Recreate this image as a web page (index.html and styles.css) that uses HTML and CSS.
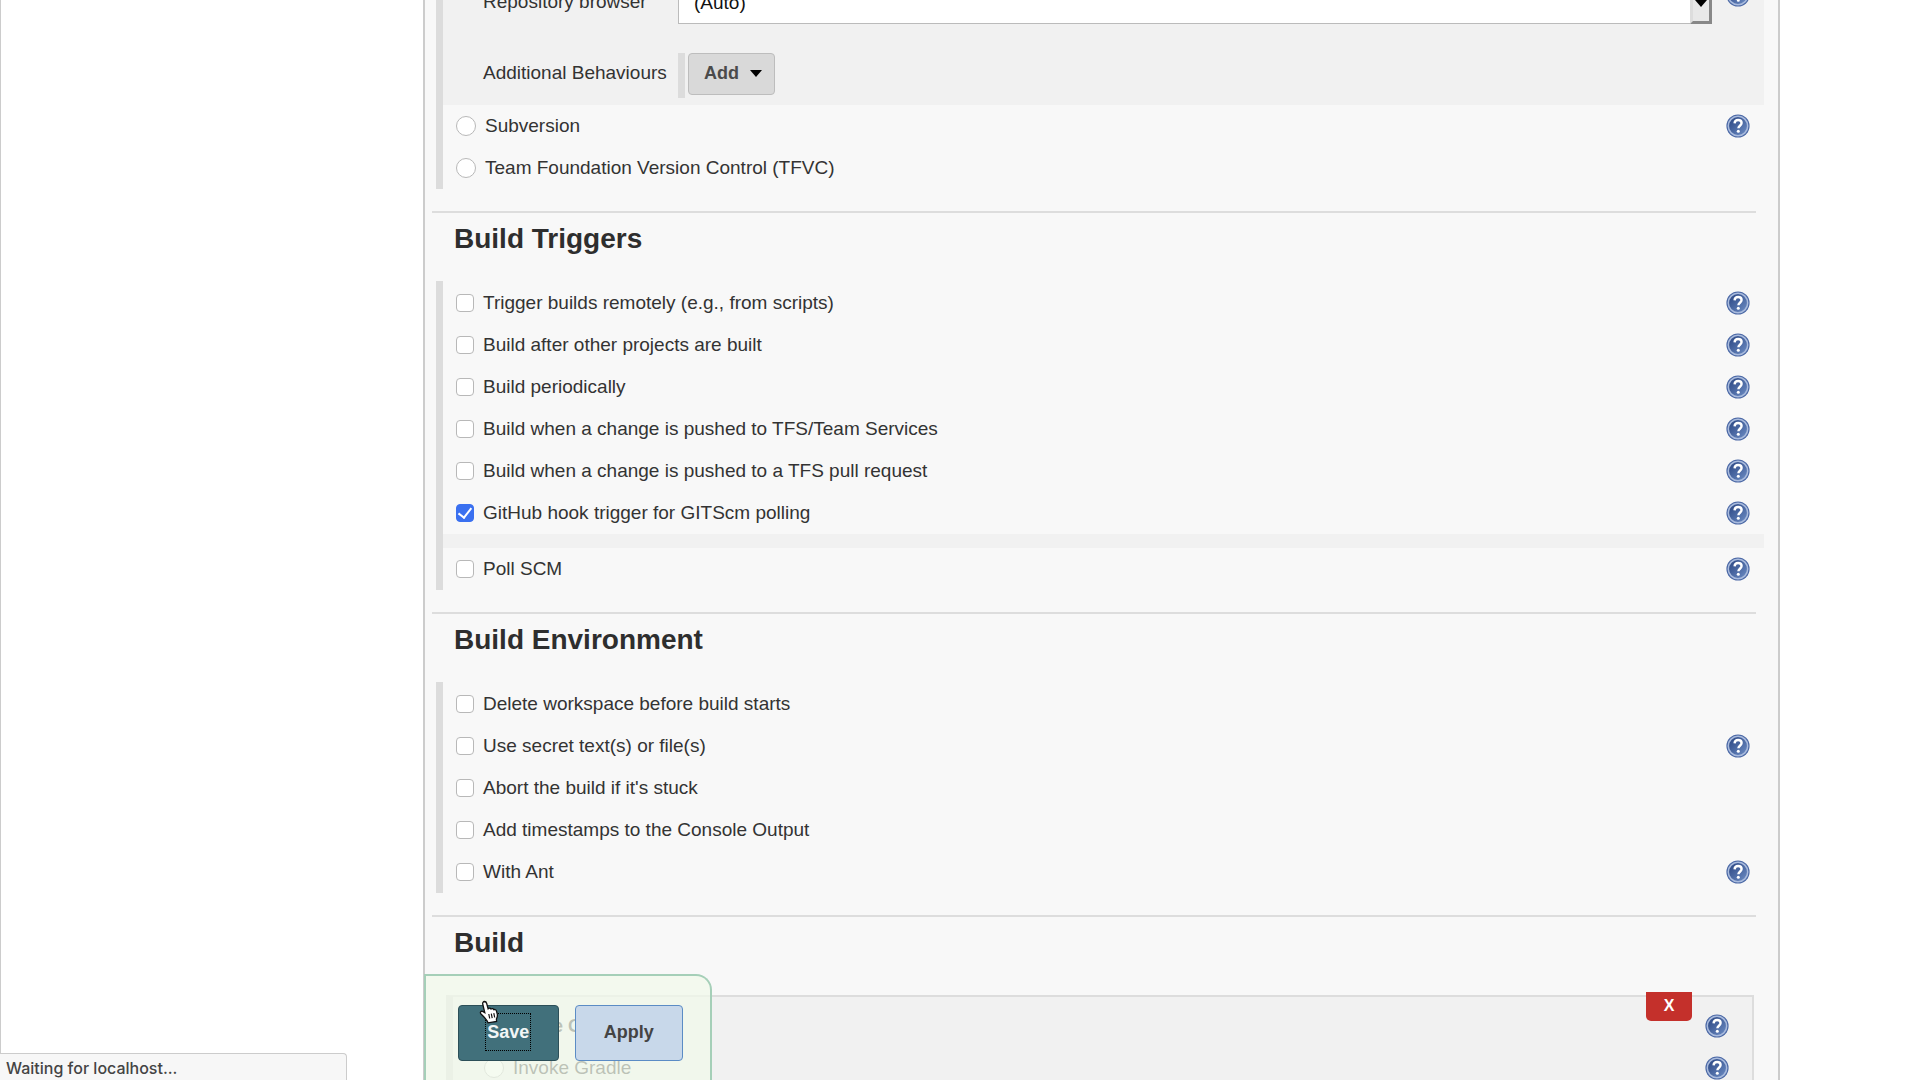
FILE: index.html
```
<!DOCTYPE html>
<html lang="en">
<head>
<meta charset="utf-8">
<title>Job configuration</title>
<link rel="stylesheet" href="styles.css">
</head>
<body>
<svg class="defs" aria-hidden="true">
  <defs>
    <linearGradient id="ball" x1="0" y1="0" x2="1" y2="1"><stop offset="0" stop-color="#27427f"/><stop offset="1" stop-color="#6f8fc6"/></linearGradient>
    <symbol id="help" viewBox="0 0 24 24">
      <circle cx="12" cy="12" r="11.6" fill="#4c69a6"/>
      <circle cx="12" cy="12" r="9.7" fill="url(#ball)" stroke="#a9bbdd" stroke-width="1.5"/>
      <path d="M8.6 9.4C8.7 7 10.2 6 12.1 6c2 0 3.5 1.100 3.500 3 0 2.600-3.200 2.800-3.200 5.200" fill="none" stroke="#fff" stroke-width="2.400"/>
      <circle cx="12.300" cy="17.300" r="1.500" fill="#fff"/>
    </symbol>
  </defs>
</svg>
<main class="panel">
  <form class="config">
    <section class="section">
      <div class="group">
        <div class="nested">
          <div class="field">
            <label class="field-name" for="browser">Repository browser</label>
            <div class="select-wrap">
              <select id="browser" class="select"><option>(Auto)</option></select>
              <span class="select-arrow"></span>
            </div>
            <a class="help" href="#" aria-label="Help"><svg><use href="#help"/></svg></a>
          </div>
          <div class="field">
            <span class="field-name">Additional Behaviours</span>
            <div class="repeat"><button type="button" class="add">Add<span class="caret"></span></button></div>
          </div>
        </div>
        <div class="row"><label class="option"><input type="radio" name="scm">Subversion</label><a class="help" href="#" aria-label="Help"><svg><use href="#help"/></svg></a></div>
        <div class="row"><label class="option"><input type="radio" name="scm">Team Foundation Version Control (TFVC)</label></div>
      </div>
    </section>
    <section class="section">
      <h2 class="title">Build Triggers</h2>
      <div class="group">
        <div class="row"><label class="option"><input type="checkbox">Trigger builds remotely (e.g., from scripts)</label><a class="help" href="#" aria-label="Help"><svg><use href="#help"/></svg></a></div>
        <div class="row"><label class="option"><input type="checkbox">Build after other projects are built</label><a class="help" href="#" aria-label="Help"><svg><use href="#help"/></svg></a></div>
        <div class="row"><label class="option"><input type="checkbox">Build periodically</label><a class="help" href="#" aria-label="Help"><svg><use href="#help"/></svg></a></div>
        <div class="row"><label class="option"><input type="checkbox">Build when a change is pushed to TFS/Team Services</label><a class="help" href="#" aria-label="Help"><svg><use href="#help"/></svg></a></div>
        <div class="row"><label class="option"><input type="checkbox">Build when a change is pushed to a TFS pull request</label><a class="help" href="#" aria-label="Help"><svg><use href="#help"/></svg></a></div>
        <div class="row"><label class="option"><input type="checkbox" checked>GitHub hook trigger for GITScm polling</label><a class="help" href="#" aria-label="Help"><svg><use href="#help"/></svg></a></div>
        <div class="nested strip"></div>
        <div class="row"><label class="option"><input type="checkbox">Poll SCM</label><a class="help" href="#" aria-label="Help"><svg><use href="#help"/></svg></a></div>
      </div>
    </section>
    <section class="section">
      <h2 class="title">Build Environment</h2>
      <div class="group">
        <div class="row"><label class="option"><input type="checkbox">Delete workspace before build starts</label></div>
        <div class="row"><label class="option"><input type="checkbox">Use secret text(s) or file(s)</label><a class="help" href="#" aria-label="Help"><svg><use href="#help"/></svg></a></div>
        <div class="row"><label class="option"><input type="checkbox">Abort the build if it's stuck</label></div>
        <div class="row"><label class="option"><input type="checkbox">Add timestamps to the Console Output</label></div>
        <div class="row"><label class="option"><input type="checkbox">With Ant</label><a class="help" href="#" aria-label="Help"><svg><use href="#help"/></svg></a></div>
      </div>
    </section>
    <section class="section">
      <h2 class="title">Build</h2>
      <div class="step">
        <button type="button" class="delete">X</button>
        <div class="row"><strong class="step-name">Invoke Gradle script</strong><a class="help" href="#" aria-label="Help"><svg><use href="#help"/></svg></a></div>
        <div class="row"><label class="option"><input type="radio" name="gradle">Invoke Gradle</label><a class="help" href="#" aria-label="Help"><svg><use href="#help"/></svg></a></div>
      </div>
    </section>
    <div class="actions">
      <button type="button" class="btn save"><span class="focus">Save</span></button>
      <button type="button" class="btn apply">Apply</button>
      <svg class="pointer" viewBox="0 0 22 24" aria-hidden="true"><path d="M5.500 1.500c1.300 0 1.900.8 2.200 2l1.400 5.200c.8-.9 2.300-.8 2.900.3.900-.7 2.300-.4 2.800.7 1.100-.5 2.400.1 2.700 1.400l.9 3.600c.3 1.700-.3 3-1 4.300l.2 2.500-8.600 1.300-.9-2C6.500 18.500 4.800 16.500 1.800 13.700c-1.200-1.300.2-2.900 1.800-2.300l2.200 1.200L3.700 4c-.3-1.300.5-2.400 1.800-2.500z" fill="#fff" stroke="#111" stroke-width="1.300"/><path d="M9.800 14l.9 4.500M12.300 13.600l.9 4.500M14.800 13.200l.9 4.300" stroke="#111" stroke-width="1.200"/></svg>
    </div>
  </form>
</main>
<div class="status">Waiting for localhost...</div>
</body>
</html>
```
FILE: styles.css
```
* { box-sizing: border-box; }
body {
  margin: 0;
  height: 100vh;
  overflow: hidden;
  background: #fff;
  border-left: 1px solid #ccc;
  color: #333;
  font: 19px/24px "Liberation Sans", Arial, sans-serif;
}
button, input, select { font: inherit; color: inherit; margin: 0; }
.defs { position: absolute; width: 0; height: 0; }
.panel {
  margin: -18px 140px 0 422px;
  border: 2px solid #ccc;
  border-width: 0 2px;
  background: #f8f8f8;
}
.config { position: relative; padding: 0 22px 0 7px; }
.section { border-top: 2px solid #ddd; padding-bottom: 22px; }
.section:first-child { border-top: 0; }
.title { margin: 0; padding: 10px 0 26px 22px; font-size: 28px; line-height: 32px; color: #2e2e2e; }
.group { margin: 0 -8px 0 4px; border-left: 7px solid #dcdcdc; padding-top: 1px; }
.section:first-child .group { padding-top: 0; }
.row { display: flex; align-items: center; height: 42px; padding: 0 14px 0 13px; }
.option { display: flex; align-items: center; gap: 9px; }
.help { display: block; width: 24px; height: 24px; margin-left: auto; }
.help svg { display: block; width: 24px; height: 24px; }
input[type=checkbox], input[type=radio] {
  appearance: none;
  display: grid;
  place-items: center;
  width: 18px;
  height: 18px;
  background: #fff;
  border: 1px solid #b8b8b8;
  border-radius: 4px;
}
input[type=radio] { width: 20px; height: 20px; border-radius: 50%; }
input[type=checkbox]:checked { background: #3a70f0; border-color: #3a70f0; }
input[type=checkbox]:checked::after {
  content: "";
  width: 6px;
  height: 11px;
  margin-bottom: 3px;
  border: solid #fff;
  border-width: 0 2px 2px 0;
  transform: rotate(38deg);
}
.nested { background: #f1f1f1; }
.strip { height: 14px; }
.nested .field { display: flex; align-items: flex-start; padding: 0 14px 0 40px; }
.field + .field { padding-top: 29px; padding-bottom: 7px; }
.field-name { width: 195px; line-height: 40px; }
.field .help { margin-top: 1px; }
.select-wrap { position: relative; flex: 1; margin-right: 14px; }
.select { display: block; appearance: none; width: 100%; height: 42px; padding: 0 15px; background: #fff; border: 1px solid #bbb; border-radius: 0; color: #111; }
.select-arrow {
  position: absolute;
  right: 0;
  top: 0;
  width: 22px;
  height: 42px;
  background: #e8e8e8;
  border: 3px solid #888;
  border-left-color: #ddd;
  border-top-color: #eee;
  display: grid;
  place-items: center;
}
.select-arrow::after { content: ""; border: 6px solid transparent; border-top: 7px solid #000; border-bottom: 0; }
.repeat { border-left: 7px solid #dcdcdc; padding: 0 0 3px 3px; }
.add { display: flex; align-items: center; gap: 11px; width: 87px; height: 42px; padding: 0 0 2px 15px; font-weight: bold; font-size: 18px; background: #d9d9d9; border: 1px solid #bdbdbd; border-radius: 4px; color: #4b4b4b; }
.caret { border: 6px solid transparent; border-top: 7px solid #000; border-bottom: 0; }
.step { position: relative; margin: 10px 2px 0 14px; padding-top: 8px; border: 2px solid #ddd; border-left: 7px solid #dcdcdc; background: #f1f1f1; }
.step .row { padding-right: 23px; padding-left: 31px; }
.step-name { padding-left: 22px; font-size: 18px; }
.delete { position: absolute; right: 60px; top: -5px; width: 46px; height: 29px; padding: 0 0 2px; border: 0; border-radius: 0 0 5px 5px; background: #c4302b; color: #fff; font-weight: bold; font-size: 16px; }
.actions {
  position: fixed;
  left: 424px;
  bottom: 0;
  display: flex;
  gap: 16px;
  width: 288px;
  height: 106px;
  padding: 29px 27px 19px 32px;
  border: 2px solid #a5cfb8;
  border-bottom: 0;
  border-radius: 0 16px 0 0;
  background: rgba(241, 249, 234, .72);
}
.btn { display: grid; place-items: center; width: 109px; height: 56px; padding: 0 0 2px; border: 1px solid #5b8cc5; border-radius: 4px; background: #c8d8ea; color: #444; font-weight: bold; font-size: 18px; }
.save { width: 101px; background: #41707b; border-color: #2c4f58; color: #f2f6f6; }
.focus { width: 46px; line-height: 36px; border: 1px dotted #000; }
.pointer { position: absolute; left: 53px; top: 24px; width: 22px; height: 24px; }
.status { position: fixed; left: 0; bottom: 0; width: 347px; height: 27px; padding-left: 6px; border: 1px solid #ccc; border-left: 0; border-bottom: 0; border-radius: 0 4px 0 0; background: #f7f7f7; color: #444; font: 500 16px/28px Inter, sans-serif; }
```
